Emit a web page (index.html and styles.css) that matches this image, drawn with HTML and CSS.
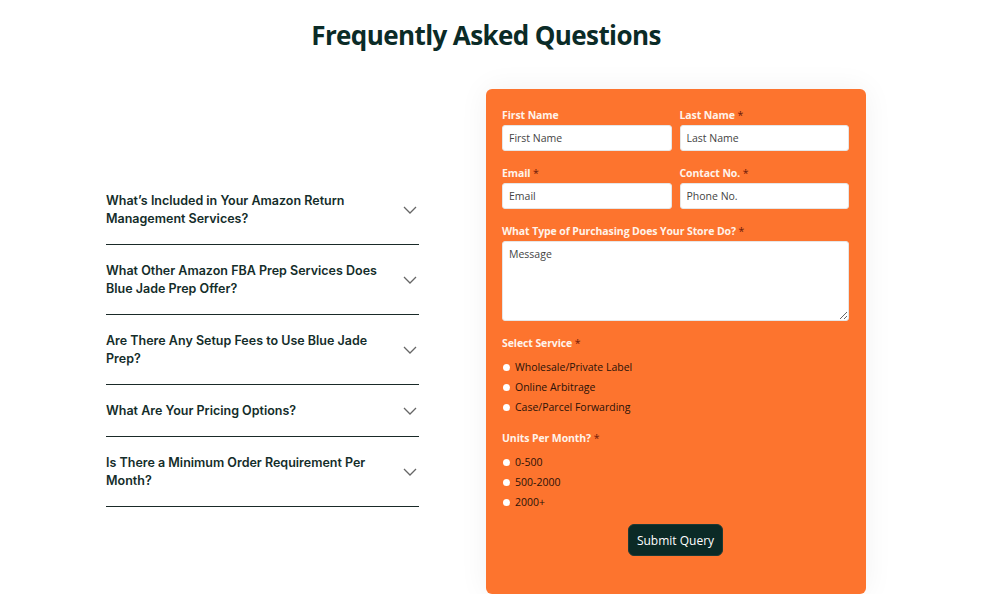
FILE: index.html
```html
<!DOCTYPE html>
<html lang="en">
<head>
<meta charset="utf-8">
<title>FAQ</title>
<link rel="stylesheet" href="styles.css">
</head>
<body>
<section class="wrap">
  <h1 class="title">Frequently Asked Questions</h1>
  <div class="cols">
    <div class="faq">
      <div class="faq-item"><span>What’s Included in Your Amazon Return Management Services?</span><svg class="chev" viewBox="0 0 14 8" width="14" height="8"><path d="M1 1l6 6 6-6"/></svg></div>
      <div class="faq-item"><span>What Other Amazon FBA Prep Services Does Blue Jade Prep Offer?</span><svg class="chev" viewBox="0 0 14 8" width="14" height="8"><path d="M1 1l6 6 6-6"/></svg></div>
      <div class="faq-item"><span>Are There Any Setup Fees to Use Blue Jade Prep?</span><svg class="chev" viewBox="0 0 14 8" width="14" height="8"><path d="M1 1l6 6 6-6"/></svg></div>
      <div class="faq-item"><span>What Are Your Pricing Options?</span><svg class="chev" viewBox="0 0 14 8" width="14" height="8"><path d="M1 1l6 6 6-6"/></svg></div>
      <div class="faq-item"><span>Is There a Minimum Order Requirement Per Month?</span><svg class="chev" viewBox="0 0 14 8" width="14" height="8"><path d="M1 1l6 6 6-6"/></svg></div>
    </div>
    <form class="card">
      <div class="row2">
        <div class="field">
          <label class="lbl">First Name</label>
          <input class="inp" type="text" placeholder="First Name">
        </div>
        <div class="field">
          <label class="lbl">Last Name <span class="req">*</span></label>
          <input class="inp" type="text" placeholder="Last Name">
        </div>
        <div class="field">
          <label class="lbl">Email <span class="req">*</span></label>
          <input class="inp" type="text" placeholder="Email">
        </div>
        <div class="field">
          <label class="lbl">Contact No. <span class="req">*</span></label>
          <input class="inp" type="text" placeholder="Phone No.">
        </div>
      </div>
      <div class="field">
        <label class="lbl">What Type of Purchasing Does Your Store Do? <span class="req">*</span></label>
        <textarea class="ta" placeholder="Message"></textarea>
      </div>
      <div class="group">
        <div class="lbl">Select Service <span class="req">*</span></div>
        <label class="opt"><input type="radio" name="svc"><span>Wholesale/Private Label</span></label>
        <label class="opt"><input type="radio" name="svc"><span>Online Arbitrage</span></label>
        <label class="opt"><input type="radio" name="svc"><span>Case/Parcel Forwarding</span></label>
      </div>
      <div class="group">
        <div class="lbl">Units Per Month? <span class="req">*</span></div>
        <label class="opt"><input type="radio" name="units"><span>0-500</span></label>
        <label class="opt"><input type="radio" name="units"><span>500-2000</span></label>
        <label class="opt"><input type="radio" name="units"><span>2000+</span></label>
      </div>
      <div class="actions"><button type="button" class="btn">Submit Query</button></div>
    </form>
  </div>
</section>
</body>
</html>
```

FILE: styles.css
```css
* { box-sizing: border-box; }
html, body { margin: 0; padding: 0; background: #ffffff; }
body { font-family: "Open Sans", "Noto Sans", sans-serif; }

.wrap {
  width: 760px;
  margin-left: 106px;
  padding-top: 17px;
}

.title {
  margin: 0 0 36px;
  text-align: center;
  font-family: "Open Sans", sans-serif;
  font-weight: 700;
  font-size: 26px;
  line-height: 36px;
  color: #0b2b27;
  letter-spacing: -0.6px;
}

.cols {
  display: flex;
  align-items: center;
  gap: 67px;
}

.faq { width: 313px; flex: none; margin-bottom: 2px; }

.faq-item {
  display: flex;
  align-items: center;
  justify-content: space-between;
  gap: 20px;
  padding: 17px 0 16px;
  border-bottom: 1px solid #1a2a28;
  font-family: "Inter", sans-serif;
  font-weight: 600;
  font-size: 12.5px;
  line-height: 18px;
  color: #142d2a;
}
.faq-item span { max-width: 275px; }
.chev { flex: none; margin-right: 2px; }
.chev path { fill: none; stroke: #666; stroke-width: 1.3; }

.card {
  width: 380px;
  flex: none;
  background: #fd742e;
  border-radius: 6px;
  padding: 19px 17px 38px 16px;
  box-shadow: 0 0 30px rgba(0, 0, 0, 0.06);
  font-family: "Open Sans", sans-serif;
}

.row2 {
  display: grid;
  grid-template-columns: 1fr 1fr;
  column-gap: 8px;
  row-gap: 15px;
  margin-bottom: 15px;
}

.field { display: flex; flex-direction: column; }

.lbl {
  display: block;
  font-size: 10.5px;
  font-weight: 700;
  line-height: 14px;
  color: #fff3ea;
  margin-bottom: 3px;
  letter-spacing: -0.1px;
}
.req { color: #6b1a0a; font-weight: 400; }

.inp, .ta {
  width: 100%;
  margin: 0;
  background: #ffffff;
  border: 1px solid #e6e6e6;
  border-radius: 3px;
  font-family: "Open Sans", sans-serif;
  font-size: 10.5px;
  color: #333;
  padding: 0 6px;
}
.inp { height: 26px; }
.ta { height: 80px; padding: 5px 6px; resize: vertical; line-height: 14px; }
.inp::placeholder, .ta::placeholder { color: #444; opacity: 1; }

.group { margin-top: 15px; }
.group .lbl { margin-bottom: 7px; }
.group + .group { margin-top: 14px; }

.opt {
  display: flex;
  align-items: center;
  gap: 5px;
  height: 20px;
  font-size: 10.5px;
  color: #2a1208;
}
.opt input {
  appearance: none;
  -webkit-appearance: none;
  width: 7px;
  height: 7px;
  margin: 0 0 0 1px;
  border-radius: 50%;
  background: #ffffff;
  border: none;
}

.actions { display: flex; justify-content: center; margin-top: 12px; }
.btn {
  height: 32px;
  padding: 0 8px;
  background: #0b2a26;
  color: #ffffff;
  border: 1px solid #1d3a35;
  border-radius: 6px;
  font-family: "Open Sans", sans-serif;
  font-size: 12px;
  cursor: pointer;
}
```
